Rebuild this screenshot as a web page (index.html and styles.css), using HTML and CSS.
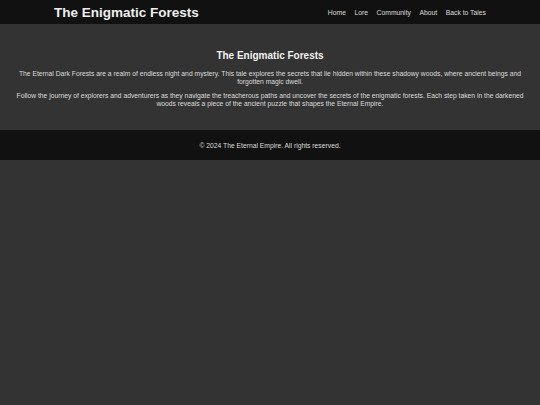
FILE: index.html
```html
<!DOCTYPE html>
<html lang="en">
<head>
    <meta charset="UTF-8">
    <meta name="viewport" content="width=device-width, initial-scale=1.0">
    <title>The Enigmatic Forests</title>
    <link rel="stylesheet" href="styles.css">
</head>
<body>

    <header class="site-header">
        <div class="header-inner">
            <h1 class="logo">The Enigmatic Forests</h1>
            <nav class="nav">
                <a href="#">Home</a>
                <a href="#">Lore</a>
                <a href="#">Community</a>
                <a href="#">About</a>
                <a href="#">Back to Tales</a>
            </nav>
        </div>
    </header>

    <main class="story">
        <h2>The Enigmatic Forests</h2>
        <p>The Eternal Dark Forests are a realm of endless night and mystery. This tale explores the secrets that lie hidden within these shadowy woods, where ancient beings and forgotten magic dwell.</p>
        <p>Follow the journey of explorers and adventurers as they navigate the treacherous paths and uncover the secrets of the enigmatic forests. Each step taken in the darkened woods reveals a piece of the ancient puzzle that shapes the Eternal Empire.</p>
    </main>

    <footer class="site-footer">
        <p>&copy; 2024 The Eternal Empire. All rights reserved.</p>
    </footer>

</body>
</html>
```

FILE: styles.css
```css
body {
    font-family: 'Liberation Sans', Arial, sans-serif;
    margin: 0;
    padding: 0;
    background: #333333;
    color: #dddddd;
}

.site-header {
    background: #111111;
    height: 24px;
}

.header-inner {
    width: 80%;
    margin: 0 auto;
    height: 100%;
    display: flex;
    align-items: center;
    justify-content: space-between;
}

.logo {
    margin: 0;
    font-size: 13.5px;
    font-weight: bold;
    color: #eeeeee;
}

.nav {
    display: flex;
    gap: 8.5px;
}

.nav a {
    color: #dddddd;
    text-decoration: none;
    font-size: 6.8px;
}

.story {
    padding: 15px 12px 16px;
    text-align: center;
}

.story h2 {
    font-size: 10px;
    line-height: 12px;
    color: #f2f2f2;
    margin: 11px 0 8px;
}

.story p {
    font-size: 6.75px;
    line-height: 8px;
    margin: 6px 0;
}

.site-footer {
    background: #111111;
    text-align: center;
    padding: 12px 0 10px;
}

.site-footer p {
    margin: 0;
    font-size: 6.75px;
    line-height: 8px;
}
```
